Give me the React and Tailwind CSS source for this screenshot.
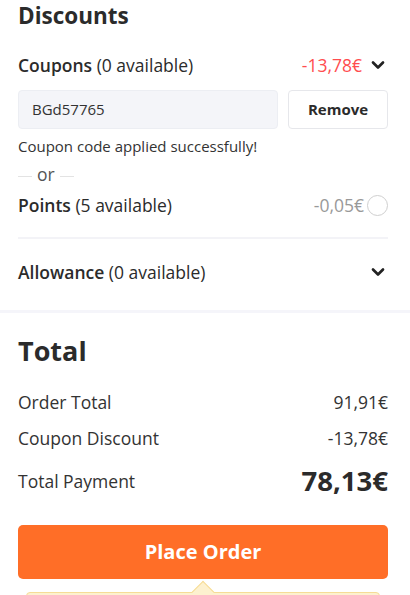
import { FiChevronDown } from "react-icons/fi";

const font = { fontFamily: '"Open Sans", "Noto Sans", sans-serif' };

const Row = ({ label, value, className = "" }) => (
    <div className={`flex items-center justify-between text-[17.5px] text-[#333] ${className}`}>
        <span>{label}</span>
        <span>{value}</span>
    </div>
);

export default function App() {
    return (
        <div className="bg-white w-[410px] h-[595px] overflow-hidden text-[#2b2b2b]" style={font}>
            {/* Discounts */}
            <div className="pl-[18px] pr-[22px]">
                <h2 className="text-[22.5px] font-bold leading-[30px] pt-[1px]">Discounts</h2>

                <div className="flex items-center justify-between mt-[22px] h-[24px] text-[17.5px]">
                    <span>
                        <span className="font-semibold">Coupons</span> (0 available)
                    </span>
                    <span className="flex items-center gap-[6px] text-[#ff4d4f]">
                        -13,78€
                        <FiChevronDown className="text-[#222] w-[20px] h-[20px]" strokeWidth={3.2} />
                    </span>
                </div>

                <div className="flex gap-[10px] mt-[13px]">
                    <div className="flex-1 h-[39px] rounded-[4px] bg-[#f4f5f9] border border-[#eceef3] flex items-center px-[13px] text-[15px] text-[#333]">
                        BGd57765
                    </div>
                    <button className="w-[100px] h-[39px] rounded-[4px] border border-[#e6e7eb] bg-white text-[15px] font-bold text-[#2b2b2b]">
                        Remove
                    </button>
                </div>

                <p className="text-[15px] mt-[7px] leading-[20px] text-[#333]">Coupon code applied successfully!</p>

                <div className="flex items-center gap-[5px] mt-[9px] h-[22px] text-[17.5px] text-[#555]">
                    <span className="w-[14px] h-px bg-[#e3e3e3]" />
                    <span className="leading-none pb-[3px]">or</span>
                    <span className="w-[14px] h-px bg-[#e3e3e3]" />
                </div>

                <div className="flex items-center justify-between mt-[6px] h-[24px] text-[17.5px]">
                    <span>
                        <span className="font-semibold">Points</span> (5 available)
                    </span>
                    <span className="flex items-center gap-[3px] text-[#999]">
                        -0,05€
                        <span className="w-[21px] h-[21px] rounded-full border border-[#cfcfcf]" />
                    </span>
                </div>

                <div className="h-[2px] bg-[#f3f3f7] mt-[20px]" />

                <div className="flex items-center justify-between mt-[21px] h-[24px] text-[17.5px]">
                    <span>
                        <span className="font-semibold">Allowance</span> (0 available)
                    </span>
                    <FiChevronDown className="text-[#222] w-[20px] h-[20px]" strokeWidth={3.2} />
                </div>
            </div>

            <div className="h-[3px] bg-[#f5f5fa] mt-[26px]" />

            {/* Total */}
            <div className="pl-[18px] pr-[22px]">
                <h2 className="text-[27px] font-bold leading-[34px] mt-[21px]">Total</h2>
                <Row label="Order Total" value="91,91€" className="mt-[22px] h-[24px]" />
                <Row label="Coupon Discount" value="-13,78€" className="mt-[12px] h-[24px]" />
                <div className="flex items-center justify-between mt-[12px] h-[38px] text-[#333]">
                    <span className="text-[17.5px]">Total Payment</span>
                    <span className="text-[27.5px] font-bold text-[#2b2b2b]">78,13€</span>
                </div>

                <button className="w-full h-[54px] mt-[25px] rounded-[5px] bg-[#ff6e27] text-white text-[20px] font-bold">
                    Place Order
                </button>

                <div className="relative mx-[8px] mt-[13px]">
                    <div className="absolute left-1/2 -translate-x-1/2 -top-[8px] w-[16px] h-[16px] rotate-45 bg-[#fdf1cf] border-l border-t border-[#f6dc97]" />
                    <div className="h-[40px] rounded-[4px] bg-[#fdf1cf] border border-[#f6dc97]" />
                </div>
            </div>
        </div>
    );
}
